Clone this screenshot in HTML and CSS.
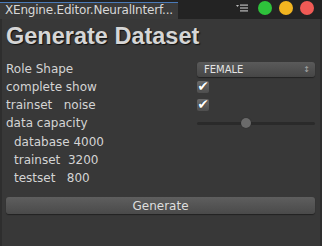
FILE: index.html
```html
<!DOCTYPE html>
<html lang="en">
<head>
  <meta charset="UTF-8" />
  <title>Generate Dataset</title>
  <link rel="stylesheet" href="styles.css">
</head>
<body>

<div class="titlebar">
  <div class="tab">XEngine.Editor.NeuralInterf...</div>
  <div class="controls">
    <svg class="menu" width="12" height="8" viewBox="0 0 12 8">
      <path d="M0 1 L3 1 L1.5 3 Z" fill="#bbb"/>
      <rect x="4" y="0.5" width="8" height="1.2" fill="#bbb"/>
      <rect x="4" y="3.4" width="8" height="1.2" fill="#bbb"/>
      <rect x="4" y="6.3" width="8" height="1.2" fill="#bbb"/>
    </svg>
    <span class="dot green"></span>
    <span class="dot yellow"></span>
    <span class="dot red"></span>
  </div>
</div>

<div class="panel">
  <h1>Generate Dataset</h1>

  <div class="row">
    <div class="label">Role Shape</div>
    <div class="field">
      <div class="select">FEMALE<span class="arrows">&#8597;</span></div>
    </div>
  </div>
  <div class="row">
    <div class="label">complete show</div>
    <div class="field"><span class="check">&#10004;</span></div>
  </div>
  <div class="row">
    <div class="label">trainset&nbsp;&nbsp; noise</div>
    <div class="field"><span class="check">&#10004;</span></div>
  </div>
  <div class="row">
    <div class="label">data capacity</div>
    <div class="field">
      <div class="slider"><span class="thumb"></span></div>
    </div>
  </div>

  <div class="stats">
    <div>database 4000</div>
    <div>trainset&nbsp; 3200</div>
    <div>testset&nbsp;&nbsp; 800</div>
  </div>

  <button class="generate">Generate</button>
</div>

</body>
</html>
```

FILE: styles.css
```css
body {
  margin: 0;
  width: 322px;
  height: 246px;
  background: #383838;
  font-family: "Lucida Grande", "DejaVu Sans", sans-serif;
  color: #d2d2d2;
  overflow: hidden;
}
.titlebar {
  height: 19px;
  background: #232323;
  display: flex;
  justify-content: space-between;
}
.tab {
  width: 178px;
  height: 17px;
  margin-top: 2px;
  padding-left: 5px;
  background: #3a3a3a;
  border-top: 1px solid #4a7ab8;
  box-sizing: border-box;
  font-size: 12px;
  line-height: 15px;
  color: #d8d8d8;
  white-space: nowrap;
  letter-spacing: -0.2px;
}
.controls {
  display: flex;
  align-items: center;
  gap: 7px;
  padding-right: 8px;
  padding-bottom: 3px;
}
.menu {
  margin-right: 3px;
}
.dot {
  width: 14px;
  height: 14px;
  border-radius: 50%;
}
.green { background: #2ec23b; }
.yellow { background: #f2b520; }
.red { background: #f05a55; }
.panel {
  height: 227px;
  border-left: 2px solid #2e2e2e;
  border-right: 2px solid #2e2e2e;
  box-sizing: border-box;
  padding: 0 5px 0 4px;
}
h1 {
  margin: 0;
  padding-top: 3px;
  height: 38px;
  font-family: "Liberation Sans", Arial, sans-serif;
  font-size: 23.5px;
  line-height: 28px;
  font-weight: bold;
  color: #d6d6d6;
  text-shadow: 1px 1px 1px #111;
}
.row {
  display: flex;
  align-items: center;
  height: 18px;
}
.label {
  width: 191px;
  font-size: 12px;
  color: #d4d4d4;
}
.field {
  flex: 1;
  display: flex;
  align-items: center;
}
.select {
  width: 100%;
  height: 15px;
  box-sizing: border-box;
  padding: 0 5px 0 7px;
  border-radius: 3px;
  background: linear-gradient(#5a5a5a, #464646);
  box-shadow: 0 1px 1px #222;
  font-size: 10px;
  line-height: 15px;
  color: #e4e4e4;
  display: flex;
  justify-content: space-between;
}
.arrows {
  font-size: 8px;
  color: #aaa;
}
.check {
  width: 12px;
  height: 12px;
  background: linear-gradient(#6a6a6a, #4e4e4e);
  border-radius: 2px;
  color: #fff;
  font-size: 14px;
  line-height: 10px;
  text-align: center;
  font-weight: bold;
  text-shadow: 0 0 1px #000;
}
.slider {
  position: relative;
  width: 100%;
  height: 3px;
  background: #2a2a2a;
  border-radius: 2px;
}
.thumb {
  position: absolute;
  left: 44px;
  top: -4px;
  width: 10px;
  height: 10px;
  border-radius: 50%;
  background: #6a6a6a;
  box-shadow: 0 0 1px #222;
}
.stats {
  padding: 1px 0 0 8px;
  font-size: 12px;
  line-height: 18px;
  color: #d4d4d4;
}
.generate {
  display: block;
  width: 100%;
  height: 17px;
  margin-top: 10px;
  padding: 0;
  border: none;
  border-radius: 3px;
  background: linear-gradient(#5e5e5e, #4a4a4a);
  box-shadow: 0 1px 1px #222;
  color: #dedede;
  font-family: "Lucida Grande", "DejaVu Sans", sans-serif;
  font-size: 12px;
}
```
